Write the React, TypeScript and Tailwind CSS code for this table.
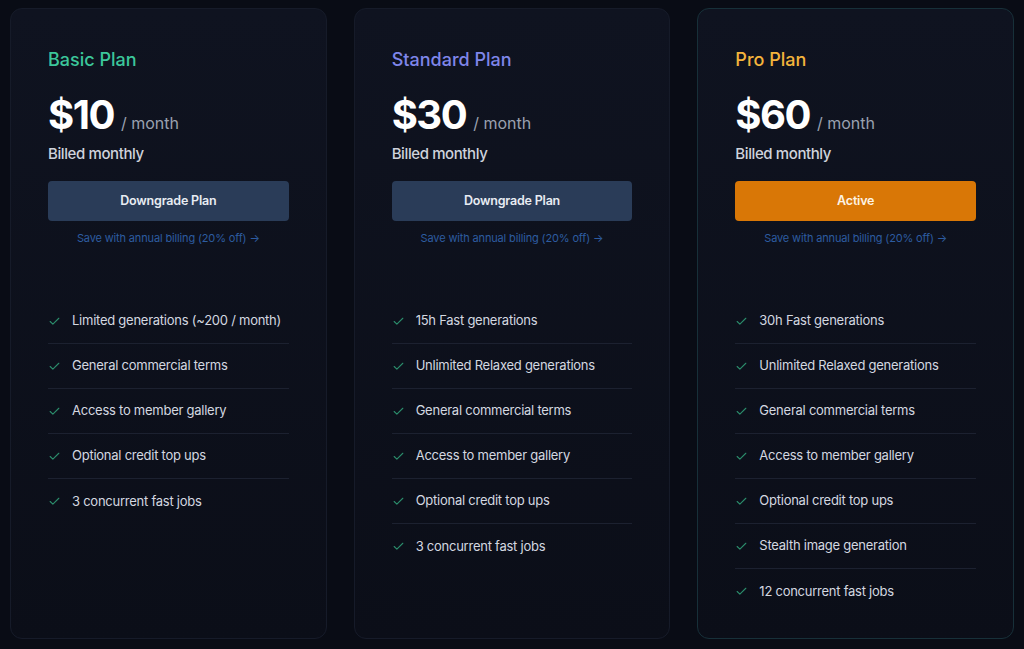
import React from "react";
import { Check } from "lucide-react";

type Plan = {
  name: string;
  nameColor: string;
  price: string;
  button: string;
  active: boolean;
  features: string[];
};

const plans: Plan[] = [
  {
    name: "Basic Plan",
    nameColor: "text-[#3cc79b]",
    price: "$10",
    button: "Downgrade Plan",
    active: false,
    features: [
      "Limited generations (~200 / month)",
      "General commercial terms",
      "Access to member gallery",
      "Optional credit top ups",
      "3 concurrent fast jobs",
    ],
  },
  {
    name: "Standard Plan",
    nameColor: "text-[#7f86ea]",
    price: "$30",
    button: "Downgrade Plan",
    active: false,
    features: [
      "15h Fast generations",
      "Unlimited Relaxed generations",
      "General commercial terms",
      "Access to member gallery",
      "Optional credit top ups",
      "3 concurrent fast jobs",
    ],
  },
  {
    name: "Pro Plan",
    nameColor: "text-[#f4b43c]",
    price: "$60",
    button: "Active",
    active: true,
    features: [
      "30h Fast generations",
      "Unlimited Relaxed generations",
      "General commercial terms",
      "Access to member gallery",
      "Optional credit top ups",
      "Stealth image generation",
      "12 concurrent fast jobs",
    ],
  },
];

function Card({ plan }: { plan: Plan }) {
  return (
    <div
      className={
        "flex-1 rounded-[12px] border bg-gradient-to-b from-[#0f1320] to-[#0b0e18] flex flex-col " +
        (plan.active ? "border-[#173039]" : "border-[#161b29]")
      }
    >
      <div className="px-[37px] pt-[37px] pb-[30px]">
        <div className={"text-[18px] leading-[28px] font-medium " + plan.nameColor}>{plan.name}</div>
        <div className="mt-[19px] flex items-baseline gap-[7px]">
          <span className="text-[40px] leading-[44px] font-bold text-white tracking-[-1.5px]">{plan.price}</span>
          <span className="text-[16px] text-[#9aa1b0]">/ month</span>
        </div>
        <div className="mt-[6px] text-[15px] leading-[22px] font-medium text-[#cfd3dc] tracking-[-0.4px]">
          Billed monthly
        </div>
        <button
          className={
            "mt-[16px] w-full h-[40px] rounded-[4px] text-[12.5px] font-semibold tracking-[-0.2px] " +
            (plan.active ? "bg-[#d97706] text-[#fdf3e4]" : "bg-[#2a3c58] text-[#e8ecf3]")
          }
        >
          {plan.button}
        </button>
        <div className="mt-[9px] text-center text-[11px] leading-[16px] text-[#2d5ca0] tracking-[-0.15px]">
          Save with annual billing (20% off) →
        </div>
      </div>
      <ul className="px-[37px] pt-[23px]">
        {plan.features.map((f, i) => (
          <li
            key={f}
            className={
              "h-[45px] flex items-center gap-[11px] text-[13px] text-[#d4d8e0] whitespace-nowrap tracking-[-0.25px] " +
              (i < plan.features.length - 1 ? "border-b border-[#1c2130]" : "")
            }
          >
            <Check size={13} strokeWidth={2} className="text-[#2b8d6c] shrink-0" />
            <span>{f}</span>
          </li>
        ))}
      </ul>
    </div>
  );
}

export default function App() {
  return (
    <div
      className="w-[1024px] h-[649px] bg-[#090c15] flex gap-[27px] pl-[10px] pr-[10px] pt-[8px] pb-[10px]"
      style={{ fontFamily: "Inter, 'Noto Sans', sans-serif" }}
    >
      {plans.map((p) => (
        <Card key={p.name} plan={p} />
      ))}
    </div>
  );
}
